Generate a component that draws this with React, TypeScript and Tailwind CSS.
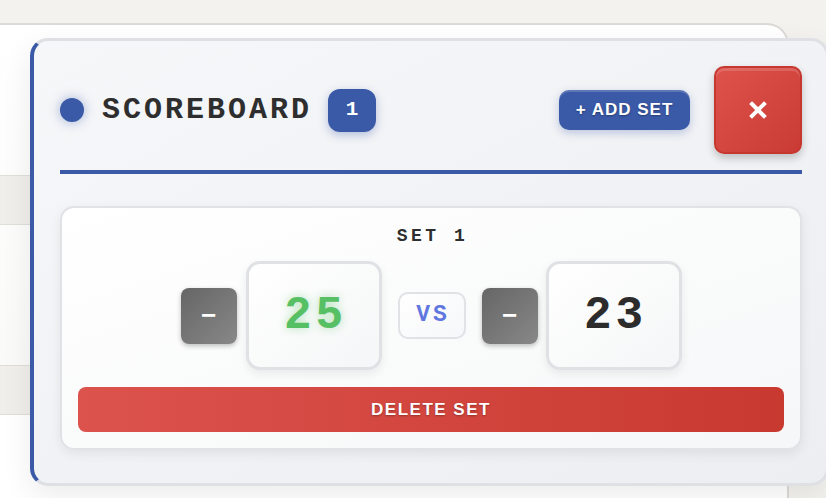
import React from 'react';

const mono = "font-['Courier_New','Liberation_Mono',monospace]";
const sans = "font-['Liberation_Sans',Arial,sans-serif]";

const MinusButton: React.FC = () => (
  <button
    className={`flex h-[56px] w-[56px] items-center justify-center rounded-lg bg-gradient-to-br from-[#666666] to-[#888888] pb-[2px] text-[26px] font-bold leading-none text-white shadow-[0_2px_5px_rgba(0,0,0,0.25)] ${sans}`}
  >
    −
  </button>
);

const ScoreBox: React.FC<{ value: number; leading?: boolean }> = ({ value, leading }) => (
  <div
    className={`flex h-[109px] w-[136px] items-center justify-center rounded-[14px] border-[3px] border-[#e0e1e5] bg-gradient-to-br from-white to-[#f5f6f7] pl-[4px] text-[46px] font-bold leading-none tracking-[4px] shadow-[0_4px_10px_rgba(0,0,0,0.07)] ${mono} ${
      leading
        ? 'text-[#58c064] [text-shadow:0_0_10px_rgba(88,192,100,0.45)]'
        : 'text-[#2c2c2c]'
    }`}
  >
    {value}
  </div>
);

export default function App() {
  const sets = [{ id: 1, home: 25, away: 23 }];

  return (
    <div className="relative h-[498px] w-[826px] overflow-hidden bg-[#f4f2ee]">
      {/* list behind the panel */}
      <div className="pt-[23px]">
        <div className="flex h-[475px] w-[789px] flex-col rounded-tr-[22px] border-t-2 border-r-2 border-[#dcdad6] bg-gradient-to-b from-white to-[#f8f8f7]">
          <div className="h-[150px]" />
          <div className="h-[50px] border-y border-[#e0ded9] bg-[#f0eeea]" />
          <div className="h-[140px]" />
          <div className="h-[50px] border-y border-[#e0ded9] bg-[#f0eeea]" />
          <div className="flex-1 bg-white" />
        </div>
      </div>

      {/* scoreboard panel */}
      <div className="absolute left-[30px] top-[38px] w-[799px] rounded-[18px] border-[3px] border-l-4 border-[#dfe0e4] border-l-[#3a5aa8] bg-gradient-to-br from-[#f6f7f9] to-[#eceef1] pl-[26px] pr-[24px] pt-[25px] pb-[33px] shadow-[0_10px_30px_rgba(0,0,0,0.08)]">
        <div className="flex items-center justify-between border-b-4 border-[#3a5aa8] pb-[16px]">
          <div className="flex items-center gap-[18px]">
            <span className="h-[24px] w-[24px] rounded-full bg-[#3a5aa8] shadow-[0_0_12px_rgba(58,90,168,0.45)]" />
            <h2 className={`text-[30px] font-bold leading-none tracking-[3px] text-[#2e2e2e] ${mono}`}>SCOREBOARD</h2>
            <span
              className={`-ml-[2px] flex h-[43px] w-[48px] items-center justify-center rounded-[12px] bg-[#3a5aa8] text-[21px] font-bold text-white shadow-[0_3px_10px_rgba(58,90,168,0.35)] ${mono}`}
            >
              {sets.length}
            </span>
          </div>
          <div className="flex items-center gap-[24px]">
            <button
              className={`flex h-[40px] w-[131px] items-center justify-center rounded-[10px] bg-[#3a5aa8] text-[17px] font-bold tracking-[1px] text-white shadow-[inset_0_2px_0_rgba(255,255,255,0.18),0_3px_8px_rgba(58,90,168,0.3)] [text-shadow:0_1px_2px_rgba(0,0,0,0.35)] ${sans}`}
            >
              + ADD SET
            </button>
            <button className="flex h-[88px] w-[88px] items-center justify-center rounded-[10px] border-2 border-[#c5372f] bg-gradient-to-br from-[#de524c] to-[#c93b34] shadow-[inset_0_3px_0_rgba(255,255,255,0.15),0_4px_8px_rgba(0,0,0,0.22)]">
              <svg width="18" height="18" viewBox="0 0 18 18">
                <path d="M3 3 L15 15 M15 3 L3 15" stroke="white" strokeWidth="4" strokeLinecap="square" />
              </svg>
            </button>
          </div>
        </div>

        {sets.map(set => (
          <div
            key={set.id}
            className="mt-[32px] rounded-[14px] border-2 border-[#e1e2e6] bg-gradient-to-br from-white to-[#f6f7f8] px-[16px] pt-[16px] pb-[16px] shadow-[0_4px_12px_rgba(0,0,0,0.07)]"
          >
            <div className={`mb-[13px] pl-[3px] text-center text-[18px] font-bold leading-[24px] tracking-[3.5px] text-[#2e2e2e] ${mono}`}>
              SET {set.id}
            </div>
            <div className="flex items-center justify-center gap-[16px]">
              <div className="flex items-center gap-[9px]">
                <MinusButton />
                <ScoreBox value={set.home} leading={set.home > set.away} />
              </div>
              <div
                className={`flex h-[47px] w-[68px] items-center justify-center rounded-[10px] border-2 border-[#e1e2e6] bg-gradient-to-br from-white to-[#f6f7f9] pl-[3px] text-[23px] font-bold tracking-[3px] text-[#6177e0] ${mono}`}
              >
                VS
              </div>
              <div className="flex items-center gap-[8px]">
                <MinusButton />
                <ScoreBox value={set.away} leading={set.away > set.home} />
              </div>
            </div>
            <button
              className={`mt-[17px] flex h-[45px] w-full items-center justify-center rounded-lg bg-gradient-to-r from-[#dc524d] to-[#c83930] text-[17px] font-bold tracking-[1.5px] text-white [text-shadow:0_1px_2px_rgba(0,0,0,0.3)] ${sans}`}
            >
              DELETE SET
            </button>
          </div>
        ))}
      </div>
    </div>
  );
}
